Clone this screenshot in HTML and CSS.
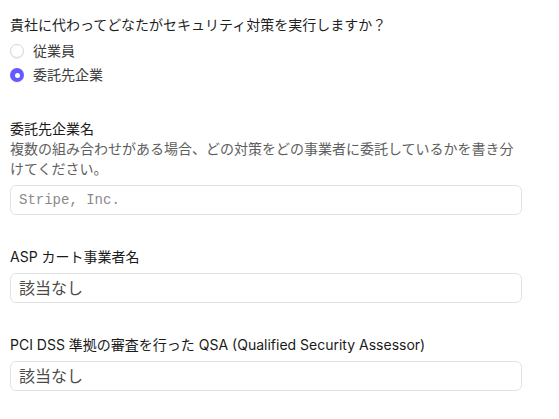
FILE: index.html
```html
<!DOCTYPE html>
<html lang="ja">
<head>
<meta charset="utf-8">
<link rel="stylesheet" href="styles.css">
</head>
<body>
<div class="form">
  <div class="field">
    <div class="question">貴社に代わってどなたがセキュリティ対策を実行しますか？</div>
    <div class="radios">
      <label class="radio"><span class="dot"></span><span>従業員</span></label>
      <label class="radio"><span class="dot checked"></span><span>委託先企業</span></label>
    </div>
  </div>
  <div class="field">
    <div class="label">委託先企業名</div>
    <div class="desc">複数の組み合わせがある場合、どの対策をどの事業者に委託しているかを書き分けてください。</div>
    <div class="input placeholder">Stripe, Inc.</div>
  </div>
  <div class="field">
    <div class="label">ASP カート事業者名</div>
    <div class="input value">該当なし</div>
  </div>
  <div class="field">
    <div class="label">PCI DSS 準拠の審査を行った QSA (Qualified Security Assessor)</div>
    <div class="input value">該当なし</div>
  </div>
</div>
</body>
</html>
```

FILE: styles.css
```css
* { box-sizing: border-box; }
html, body { margin: 0; padding: 0; background: #fff; }
body {
  font-family: "Inter", "Noto Sans CJK JP", sans-serif;
  color: #1f1f1f;
  font-size: 14px;
  line-height: 20px;
}
.form {
  width: 532px;
  padding: 15px 10px;
  display: flex;
  flex-direction: column;
  gap: 32px;
}
.field { display: flex; flex-direction: column; }
.question { color: #1f1f1f; }
.radios { display: flex; flex-direction: column; margin-top: 4px; }
.radio {
  display: flex;
  align-items: center;
  height: 24px;
  gap: 9px;
  color: #3c3c3c;
}
.dot {
  width: 14px;
  height: 14px;
  border-radius: 50%;
  border: 1px solid #d6d6d6;
  box-shadow: 0 1px 1px rgba(0, 0, 0, 0.06);
  background: #fff;
  flex: none;
  position: relative;
}
.dot.checked {
  border: none;
  background: #635bff;
}
.dot.checked::after {
  content: "";
  position: absolute;
  left: 4.5px;
  top: 4.5px;
  width: 5px;
  height: 5px;
  border-radius: 50%;
  background: #fff;
}
.label { color: #1a1a1a; font-weight: 400; }
.desc { color: #5e5e5e; }
.input {
  margin-top: 6px;
  height: 30px;
  width: 512px;
  border: 1px solid #e3e3e3;
  border-radius: 6px;
  padding: 0 8px;
  display: flex;
  align-items: center;
}
.placeholder {
  font-family: "Liberation Mono", "DejaVu Sans Mono", monospace;
  font-size: 14px;
  color: #8a8a8a;
}
.value {
  font-size: 16px;
  color: #4a4a4a;
}
```
